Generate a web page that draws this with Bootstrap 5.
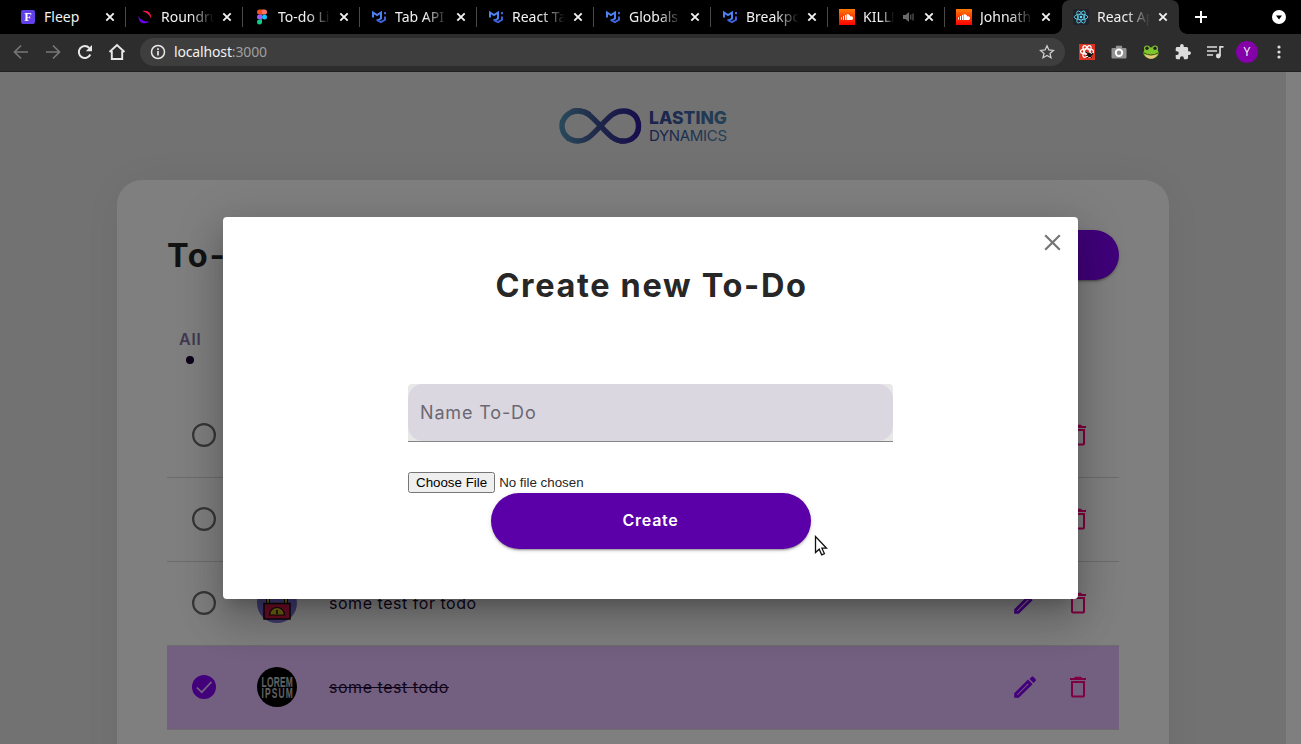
<!DOCTYPE html>
<html lang="en">
<head>
<meta charset="utf-8">
<title>React App</title>
<link href="https://cdn.jsdelivr.net/npm/bootstrap@5.3.0/dist/css/bootstrap.min.css" rel="stylesheet">
<style>
html,body{height:744px;overflow:hidden}
body{font-family:Inter,"Noto Sans",sans-serif;background:#e5e5e5;color:#272727}
svg{display:block;flex:none}
.browser{font-family:"Noto Sans","Open Sans",sans-serif;font-size:14px;line-height:20px;color:#f1f1f1}
.strip{height:34px;background:#000;padding-left:9px}
.tab-item{width:117px;height:34px;padding-left:11px;position:relative}
.tab-item:not(.current):not(.before)::after{content:"";position:absolute;right:0;top:7px;width:1px;height:20px;background:#4a4a4a}
.tab-item .fav{width:16px;height:16px}
.tab-title{width:54px;margin-left:8px;overflow:hidden;white-space:nowrap;-webkit-mask-image:linear-gradient(90deg,#000 55%,transparent 98%);mask-image:linear-gradient(90deg,#000 55%,transparent 98%)}
.tab-title.full{-webkit-mask-image:none;mask-image:none}
.tab-item .x{margin-left:7px}
.current{background:#2d2d2d;border-radius:8px 8px 0 0}
.current::before,.current::after{content:"";position:absolute;bottom:0;width:8px;height:8px}
.current::before{left:-8px;background:radial-gradient(circle at 0 0,transparent 7.5px,#2d2d2d 8px)}
.current::after{right:-8px;background:radial-gradient(circle at 100% 0,transparent 7.5px,#2d2d2d 8px)}
.toolbar{height:38px;background:#2d2d2d;border-bottom:1px solid #202020;padding:0 0 1px 13px}
.omni{width:925px;height:28px;border-radius:14px;background:#3e3e3e;margin-left:14px;padding:0 10px}
.url{letter-spacing:-.15px}
.profile{width:22px;height:22px;background:#8400a8;font-size:12px}
.page{height:672px;position:relative}
.sheet{width:1286px;height:672px;background:#e5e5e5;overflow:hidden;padding-top:34px}
.gutter{width:15px;background:#fff}
.panel{width:1052px;height:700px;flex:none;margin-top:34px;border-radius:25px;background:#fff;box-shadow:0 0 50px rgba(0,0,0,.06);padding:50px 50px 0}
.panel-title,.dialog-title{font-weight:700;font-size:32.5px;line-height:48px;color:#272727;letter-spacing:1.65px}
.panel-title{padding-top:2px}
.dialog-title{padding-left:2px}
.add-btn{width:200px;height:50px;border-radius:25px;background:#8000f5;box-shadow:0 3px 1px -2px rgba(0,0,0,.2),0 2px 2px rgba(0,0,0,.14),0 1px 5px rgba(0,0,0,.12)}
.filter{margin:47px 0 0 12px;width:22px;font-size:16px;line-height:24px;font-weight:600;color:#8272a4;letter-spacing:.8px}
.dot{width:8px;height:8px;background:#1e0037;margin:5px auto 0}
.todo{height:84px;border-bottom:1px solid #d8d8d8;padding:0 33px 1px 25px;font-size:16px;letter-spacing:.53px;color:#1e0a35}
.todo.done{background:#e6bfff}
.todo .ava{margin-left:41px}
.todo .txt{margin-left:32px}
.todo .bin{margin-left:33px}
.overlay{inset:0;background:rgba(0,0,0,.5)}
.dialog{width:855px;height:382px;border-radius:4px;background:#fff;padding-top:45px;box-shadow:0 11px 15px -7px rgba(0,0,0,.2),0 24px 38px 3px rgba(0,0,0,.14),0 9px 46px 8px rgba(0,0,0,.12)}
.close-x{right:17px;top:17px}
.fields{width:485px;margin-top:74px}
.name-wrap{height:58px;background:#e8e8e8;border-bottom:1px solid #858585;border-radius:4px 4px 0 0}
.name-input{height:57px;border:0;border-radius:15px;background:#dad7e0;padding:0 12px;font-size:18px;width:100%;letter-spacing:.85px}
.name-input::placeholder{color:#6b6871;opacity:1}
.file-input{display:block;font:13.333px "Liberation Sans",Arial,sans-serif;height:21px;margin-top:30px}
.create-btn,.create-btn:hover{width:320px;height:56px;padding:0 0 2px;border:0;border-radius:28px;background:#5b00a8;color:#fff;font-weight:600;font-size:16px;letter-spacing:.75px;box-shadow:0 3px 1px -2px rgba(0,0,0,.2),0 2px 2px rgba(0,0,0,.14),0 1px 5px rgba(0,0,0,.12)}
.pointer{left:814px;top:463px}
</style>
</head>
<body>
<svg width="0" height="0" class="position-absolute">
<defs>
<symbol id="mui" viewBox="0 0 16 16"><path fill="none" stroke="#4d82f0" stroke-width="2" d="M2 8.500V3.500L6 6 10 3.500V9.500L6.500 11.500"/><path fill="none" stroke="#3d63dc" stroke-width="2" d="M6.500 10V11.300L10 13.200 14 10.800V7.500M14 3v2.200"/></symbol>
<linearGradient id="scg" x2="0" y2="1"><stop stop-color="#ff7a00"/><stop offset="1" stop-color="#f00"/></linearGradient>
<symbol id="sc" viewBox="0 0 16 16"><path fill="url(#scg)" d="M0 0h16v16H0z"/><path stroke="#fff" d="M2.500 8.500v2M4.500 7v4M6.500 6v5"/><path fill="#fff" d="M7.500 5.500c2-1 3.500.2 3.800 2 1.500-.5 2.700.4 2.700 1.700s-1 1.800-1.800 1.800H7.500z"/></symbol>
<symbol id="tx" viewBox="0 0 10 10"><path d="M1.300 1.300l7.400 7.400M8.700 1.300L1.300 8.700" stroke="#f1f1f1" stroke-width="1.900"/></symbol>
<symbol id="ring" viewBox="0 0 24 24"><circle cx="12" cy="12" r="10.900" fill="none" stroke="#6c6c6c" stroke-width="2.200"/></symbol>
<symbol id="pen" viewBox="0 0 24 24"><path fill="none" stroke="#8500f7" stroke-width="2.800" d="M2.600 21.400v-2.500L15 6.600l2.600 2.600L5.200 21.400z"/><path fill="#8500f7" d="M16.500 4l2.200-2.200c.5-.5 1.100-.5 1.600 0l2.400 2.400c.5.500.5 1.100 0 1.600L20.500 8z"/></symbol>
<symbol id="bin" viewBox="0 0 16 22"><path fill="#ff0080" d="M0 2h4l1-1.200h6L12 2h4v2H0z"/><path fill="none" stroke="#ff0080" stroke-width="2" d="M2 6h12v13.500q0 1-1 1H3q-1 0-1-1z"/></symbol>
</defs>
</svg>
<header class="browser">
<nav class="strip d-flex">
<div class="tab-item d-flex align-items-center"><svg class="fav" viewBox="0 0 16 16"><rect x="1" y="1" width="14" height="14" rx="2" fill="#6240e8"/><text x="8" y="12.300" text-anchor="middle" font-family="Liberation Serif" font-weight="700" font-size="12" fill="#fff">F</text></svg><span class="tab-title full">Fleep</span><svg class="x" width="10" height="10"><use href="#tx"/></svg></div>
<div class="tab-item d-flex align-items-center"><svg class="fav" viewBox="0 0 16 16"><path fill="#f2184f" d="M5.500 2.300C10 .5 15 4 14 9.500c-1.200-3.500-4-6-8.500-7.200z"/><path fill="#7000f5" d="M1.500 7c1.500 3.500 4.500 5.500 10.500 5.700C7.500 16.500 1 13.500 1.500 7z"/></svg><span class="tab-title">Roundru</span><svg class="x" width="10" height="10"><use href="#tx"/></svg></div>
<div class="tab-item d-flex align-items-center"><svg class="fav" viewBox="0 0 16 16"><path fill="#f24e1e" d="M8 .5H5.500a2.500 2.500 0 000 5H8z"/><path fill="#ff7262" d="M8 .5h2.500a2.500 2.500 0 010 5H8z"/><path fill="#a259ff" d="M8 5.500H5.500a2.500 2.500 0 000 5H8z"/><circle cx="10.500" cy="8" r="2.500" fill="#1abcfe"/><path fill="#0acf83" d="M8 10.500H5.500A2.500 2.500 0 108 13z"/></svg><span class="tab-title">To-do Li</span><svg class="x" width="10" height="10"><use href="#tx"/></svg></div>
<div class="tab-item d-flex align-items-center"><svg class="fav"><use href="#mui"/></svg><span class="tab-title">Tab API</span><svg class="x" width="10" height="10"><use href="#tx"/></svg></div>
<div class="tab-item d-flex align-items-center"><svg class="fav"><use href="#mui"/></svg><span class="tab-title">React Ta</span><svg class="x" width="10" height="10"><use href="#tx"/></svg></div>
<div class="tab-item d-flex align-items-center"><svg class="fav"><use href="#mui"/></svg><span class="tab-title">Globals</span><svg class="x" width="10" height="10"><use href="#tx"/></svg></div>
<div class="tab-item d-flex align-items-center"><svg class="fav"><use href="#mui"/></svg><span class="tab-title">Breakpo</span><svg class="x" width="10" height="10"><use href="#tx"/></svg></div>
<div class="tab-item d-flex align-items-center"><svg class="fav"><use href="#sc"/></svg><span class="tab-title" style="width:32px">KILL!</span><svg class="ms-2" width="14" height="12" viewBox="0 0 14 12"><path fill="#6a6a6a" d="M0 4h2.500L6 1v10L2.500 8H0z"/><path fill="none" stroke="#6a6a6a" d="M7.800 3.500v5M10 2.500v7"/></svg><svg class="x" width="10" height="10"><use href="#tx"/></svg></div>
<div class="tab-item before d-flex align-items-center"><svg class="fav"><use href="#sc"/></svg><span class="tab-title">Johnath</span><svg class="x" width="10" height="10"><use href="#tx"/></svg></div>
<div class="tab-item current d-flex align-items-center"><svg class="fav" viewBox="0 0 16 16"><rect width="16" height="16" rx="1" fill="#20232a"/><g fill="none" stroke="#61dafb" stroke-width=".8"><ellipse cx="8" cy="8" rx="6.800" ry="2.800"/><ellipse cx="8" cy="8" rx="6.800" ry="2.800" transform="rotate(60 8 8)"/><ellipse cx="8" cy="8" rx="6.800" ry="2.800" transform="rotate(120 8 8)"/></g><circle cx="8" cy="8" r="1.300" fill="#61dafb"/></svg><span class="tab-title">React Ap</span><svg class="x" width="10" height="10"><use href="#tx"/></svg></div>
<svg width="12" height="12" class="align-self-center" style="margin-left:16px" viewBox="0 0 12 12"><path d="M6 0v12M0 6h12" stroke="#fff" stroke-width="2"/></svg>
<svg class="ms-auto" width="14" height="34" style="margin-right:15px" viewBox="0 0 14 34"><circle cx="7" cy="17" r="7" fill="#fff"/><path d="M4 15.500h6l-3 4z" fill="#000"/></svg>
</nav>
<div class="toolbar d-flex align-items-center">
<svg width="16" height="16" viewBox="0 0 16 16"><path d="M15 8H2M8 1.500L1.500 8 8 14.500" fill="none" stroke="#777" stroke-width="1.700"/></svg>
<svg width="16" height="16" class="ms-3" viewBox="0 0 16 16"><path d="M1 8h13M8 1.500L14.500 8 8 14.500" fill="none" stroke="#777" stroke-width="1.700"/></svg>
<svg width="16" height="16" class="ms-3" viewBox="0 0 16 16"><path d="M13.300 10.500A6 6 0 1112.300 4" fill="none" stroke="#e8e8e8" stroke-width="2"/><path d="M15 1v6.300H8.800z" fill="#e8e8e8"/></svg>
<svg width="18" height="18" style="margin-left:15px" viewBox="0 0 18 18"><path d="M1.500 9L9 2l7.500 7M3.800 8v8h10.400V8" fill="none" stroke="#e8e8e8" stroke-width="1.900"/></svg>
<div class="omni d-flex align-items-center">
<svg width="16" height="16" viewBox="0 0 16 16"><circle cx="8" cy="8" r="6.500" fill="none" stroke="#e8e8e8" stroke-width="1.500"/><path d="M8 7v4.500M8 4.300v1.700" stroke="#e8e8e8" stroke-width="1.700"/></svg>
<span class="url ms-2">localhost<span style="color:#9e9e9e">:3000</span></span>
<svg class="ms-auto" width="16" height="16" viewBox="0 0 16 16"><path d="M8 1.800l1.900 4.200 4.500.4-3.400 3 1 4.400L8 11.500l-4 2.300 1-4.400-3.400-3L6.100 6z" fill="none" stroke="#ccc" stroke-width="1.300"/></svg>
</div>
<svg width="16" height="16" style="margin-left:14px" viewBox="0 0 16 16"><path fill="#dd3222" d="M0 0h16v16H0z"/><g fill="none" stroke="#fff" stroke-width="1.200"><ellipse cx="8" cy="7.500" rx="6.500" ry="2.600"/><ellipse cx="8" cy="7.500" rx="6.500" ry="2.600" transform="rotate(60 8 7.500)"/><ellipse cx="8" cy="7.500" rx="6.500" ry="2.600" transform="rotate(120 8 7.500)"/></g><path d="M7 8l6 6M14 9l-6 5M7 11.500l7-1" stroke="#111"/><ellipse cx="10.500" cy="11" rx="2" ry="2.700" transform="rotate(-40 10.500 11)" fill="#111"/></svg>
<svg width="16" height="16" class="ms-3" viewBox="0 0 16 16"><path fill="#929292" d="M5 3V1.800h6V3l.5 1H14.500q1 0 1 1v8.500q0 1-1 1h-13q-1 0-1-1V5q0-1 1-1H4.500z"/><circle cx="8" cy="8.800" r="4.200" fill="#fff"/><circle cx="8" cy="8.800" r="2.200" fill="#888"/></svg>
<svg width="16" height="16" class="ms-3" viewBox="0 0 16 16"><g fill="#7fc52c"><circle cx="4" cy="4.500" r="3"/><circle cx="12" cy="4.500" r="3"/><ellipse cx="8" cy="9" rx="7.600" ry="5.800"/></g><circle cx="4" cy="4.300" r="1.700" fill="#222"/><circle cx="12" cy="4.300" r="1.700" fill="#222"/><path fill="#e7c779" d="M1.500 9.500q6.500 3.500 13 0Q12.500 14.800 8 14.800T1.500 9.500z"/><path d="M1 9q7 4 14 0" stroke="#39510f" fill="none"/></svg>
<svg width="16" height="16" class="ms-3" viewBox="1 1 22 22"><path fill="#dcdcdc" d="M20.500 11H19V7c0-1.100-.9-2-2-2h-4V3.500a2.500 2.500 0 00-5 0V5H4c-1.100 0-2 .9-2 2v3.800h1.500a2.700 2.700 0 010 5.400H2V20c0 1.100.9 2 2 2h3.800v-1.500a2.700 2.700 0 015.400 0V22H17c1.100 0 2-.9 2-2v-4h1.500a2.500 2.500 0 000-5z"/></svg>
<svg width="17" height="14" class="ms-3" viewBox="0 0 17 14"><path d="M0 2h10M0 6h10M0 10h6" stroke="#dcdcdc" stroke-width="1.700"/><path d="M13 11V1.800h3.500" fill="none" stroke="#dcdcdc" stroke-width="1.700"/><circle cx="11.300" cy="11" r="2.400" fill="#dcdcdc"/></svg>
<span class="profile rounded-circle d-flex align-items-center justify-content-center" style="margin-left:12px">Y</span>
<svg width="4" height="14" style="margin-left:19px" viewBox="0 0 4 14"><g fill="#dcdcdc"><circle cx="2" cy="2" r="1.600"/><circle cx="2" cy="7" r="1.600"/><circle cx="2" cy="12" r="1.600"/></g></svg>
</div>
</header>
<main class="page d-flex">
<div class="sheet d-flex flex-column align-items-center">
<svg width="170" height="40" viewBox="0 0 170 40"><defs><linearGradient id="lg" x2="1"><stop stop-color="#5290b4"/><stop offset=".5" stop-color="#3c4c90"/><stop offset="1" stop-color="#2e1c9c"/></linearGradient><linearGradient id="tg" gradientUnits="userSpaceOnUse" x1="93" x2="170" y1="0" y2="0"><stop stop-color="#34449a"/><stop offset="1" stop-color="#4c84ac"/></linearGradient></defs>
<path fill="none" stroke="url(#lg)" stroke-width="5.400" d="M42.500 20C34 11 29 5 20 5S4 12 4 20 11 35 20 35 34 29 42.500 20 56 5 65.500 5 80.500 12 80.500 20 75 35 65.500 35 51 29 42.500 20z"/>
<path fill="none" stroke="url(#lg)" stroke-width="1.200" d="M2.500 14C1 24 5 30 10 35M76 6c7 5 9 18 2 26M13 3.500C19 1.500 28 3 33 7M52 32c6 5 14 7 20 3"/>
<g fill="url(#tg)" font-family="Inter"><text x="91" y="18.300" font-size="17.500" font-weight="800" textLength="78">LASTING</text><text x="91" y="35" font-size="15" textLength="78">DYNAMICS</text></g></svg>
<section class="panel">
<div class="d-flex justify-content-between align-items-center"><h1 class="panel-title m-0">To-Do</h1><div class="add-btn"></div></div>
<div class="filter"><span>All</span><div class="dot rounded-circle"></div></div>
<div style="margin-top:30px">
<div class="todo d-flex align-items-center"><svg width="24" height="24"><use href="#ring"/></svg><svg class="ms-auto" width="24" height="24"><use href="#pen"/></svg><svg class="bin" width="16" height="22"><use href="#bin"/></svg></div>
<div class="todo d-flex align-items-center"><svg width="24" height="24"><use href="#ring"/></svg><svg class="ms-auto" width="24" height="24"><use href="#pen"/></svg><svg class="bin" width="16" height="22"><use href="#bin"/></svg></div>
<div class="todo d-flex align-items-center"><svg width="24" height="24"><use href="#ring"/></svg><svg class="ava" width="40" height="40" viewBox="0 0 40 40"><circle cx="20" cy="20" r="20" fill="#7b72dc"/><path fill="none" stroke="#111" stroke-width="4" d="M11 20v-6h18v6"/><path stroke="#c8b020" stroke-width="2" d="M11 20v-4M29 20v-4"/><rect x="7" y="20.500" width="26" height="15.500" fill="#d81b4a" stroke="#111" stroke-width="1.500"/><path d="M12.500 32a7.500 7.500 0 0115 0z" fill="#d8c020" stroke="#111" stroke-width="1.200"/><path d="M20 31v-4" stroke="#111" stroke-width="1.500"/></svg><span class="txt">some test for todo</span><svg class="ms-auto" width="24" height="24"><use href="#pen"/></svg><svg class="bin" width="16" height="22"><use href="#bin"/></svg></div>
<div class="todo done d-flex align-items-center"><svg width="24" height="24" viewBox="0 0 24 24"><circle cx="12" cy="12" r="12" fill="#8500f7"/><path d="M4.800 12.500l5 4.700L19.500 6.800" fill="none" stroke="#e6bfff" stroke-width="1.700"/></svg><svg class="ava" width="40" height="40" viewBox="0 0 40 40"><circle cx="20" cy="20" r="20" fill="#000"/><g fill="#c4c4c4" font-family="Liberation Sans" font-weight="700" letter-spacing="0" font-size="15.300"><text transform="translate(4.500 19.800) scale(.55 1)" textLength="57">LOREM</text><text transform="translate(4.500 31.300) scale(.55 1)" textLength="57">IPSUM</text></g></svg><span class="txt text-decoration-line-through">some test todo</span><svg class="ms-auto" width="24" height="24"><use href="#pen"/></svg><svg class="bin" width="16" height="22"><use href="#bin"/></svg></div>
</div>
</section>
</div>
<div class="gutter"></div>
<div class="overlay position-absolute d-flex align-items-center justify-content-center">
<div class="dialog position-relative d-flex flex-column align-items-center" role="dialog">
<svg class="close-x position-absolute" width="17" height="17" viewBox="0 0 17 17"><path d="M1.200 1.200l14.600 14.600M15.800 1.200L1.200 15.800" stroke="#757575" stroke-width="2.200"/></svg>
<h2 class="dialog-title m-0">Create new To-Do</h2>
<form class="fields">
<div class="name-wrap"><input class="name-input" placeholder="Name To-Do" aria-label="Name To-Do"></div>
<input type="file" class="file-input">
<button type="button" class="create-btn btn d-block mx-auto">Create</button>
</form>
</div>
</div>
<svg class="pointer position-absolute" width="14" height="22" viewBox="0 0 14 22"><path d="M1.500 1.500v16l3.700-3.300 2.500 5.600 2.700-1.200-2.500-5.400h4.700z" fill="#fff" stroke="#111" stroke-width="1.300"/></svg>
</main>
<script src="https://cdn.jsdelivr.net/npm/bootstrap@5.3.0/dist/js/bootstrap.bundle.min.js"></script>
</body>
</html>
